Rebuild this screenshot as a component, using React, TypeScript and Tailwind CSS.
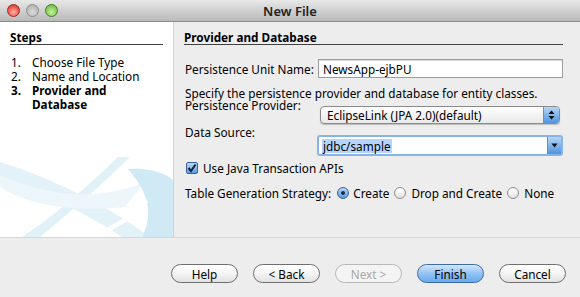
import React from 'react'

const font = { fontFamily: '"Lucida Grande", "Noto Sans", sans-serif' }

function Light({ from, to, ring }: { from: string; to: string; ring: string }) {
  return (
    <div
      className="h-[13px] w-[13px] rounded-full border"
      style={{ background: `radial-gradient(circle at 50% 65%, ${from}, ${to})`, borderColor: ring }}
    />
  )
}

function Watermark() {
  return (
    <svg className="absolute bottom-0 left-0" width="174" height="80" viewBox="0 0 174 80">
      <path d="M0 5 C50 20 110 50 150 80 L122 80 C90 58 40 35 0 20 Z" fill="#e3f2f9" />
      <path d="M40 80 C70 55 105 25 130 0 L118 0 C92 25 60 55 22 80 Z" fill="#e0f1f8" />
      <path d="M0 30 C30 50 80 55 125 50 L145 25 C110 40 60 45 0 18 Z" fill="#edf6fb" />
      <path d="M128 12 C155 10 172 20 174 25 L174 80 L142 80 C152 60 152 40 128 12 Z" fill="#cfe9f5" />
      <path d="M95 80 C118 72 136 60 148 45 L146 42 C132 58 112 70 85 80 Z" fill="#ffffff" />
      <path d="M125 66 C134 60 142 52 147 46 L145 44 C137 53 128 60 117 66 Z" fill="#ffffff" />
    </svg>
  )
}

function Btn({ children, primary, disabled }: { children: React.ReactNode; primary?: boolean; disabled?: boolean }) {
  return (
    <div
      className={`flex h-[19px] w-[67px] items-center justify-center rounded-full border ${
        disabled
          ? 'border-[#b8b8b8] bg-[#f4f4f4] text-[#a8a8a8]'
          : primary
          ? 'border-[#3d6aa8] bg-gradient-to-b from-[#d3e7fc] via-[#93c2f3] to-[#67aaf0] text-black'
          : 'border-[#6f6f6f] bg-gradient-to-b from-white via-[#f4f4f4] to-[#e2e2e2] text-black'
      }`}
    >
      {children}
    </div>
  )
}

function Radio({ checked }: { checked?: boolean }) {
  return (
    <div
      className={`flex h-[12px] w-[12px] shrink-0 items-center justify-center rounded-full border ${
        checked ? 'border-[#3a6296] bg-gradient-to-b from-[#b9d8f8] to-[#5d9be3]' : 'border-[#8c8c8c] bg-gradient-to-b from-white to-[#e4e4e4]'
      }`}
    >
      {checked && <div className="h-[4px] w-[4px] rounded-full bg-[#1b2b44]" />}
    </div>
  )
}

export default function App() {
  return (
    <div className="flex h-[297px] w-[580px] flex-col overflow-hidden whitespace-nowrap bg-[#ededed] text-[11.75px] leading-[14px] text-black" style={font}>
      {/* Title bar */}
      <div className="relative flex h-[22px] shrink-0 items-center border-b border-[#8a8a8a] bg-gradient-to-b from-[#e8e8e8] to-[#b9b9b9]">
        <div className="flex items-center gap-[6px] pl-[7px]">
          <Light from="#ffb0a8" to="#d81e14" ring="#9a2a22" />
          <Light from="#dcdcdc" to="#a9a9a9" ring="#8e8e8e" />
          <Light from="#c9f2a0" to="#56b42a" ring="#3f7d28" />
        </div>
        <div className="absolute inset-0 flex items-center justify-center text-[13px] font-semibold text-[#222]">New File</div>
      </div>

      <div className="flex h-[216px] shrink-0 border-b border-[#d8d8d8]">
        {/* Steps */}
        <div className="relative w-[174px] shrink-0 overflow-hidden border-r border-[#d2d2d2] bg-white px-[10px] pt-[8px]">
          <Watermark />
          <div className="relative border-b border-[#404040] font-bold">Steps</div>
          <div className="relative mt-[10px]">
            <div className="flex"><span className="w-[22px] pl-[1px]">1.</span><span>Choose File Type</span></div>
            <div className="flex"><span className="w-[22px] pl-[1px]">2.</span><span>Name and Location</span></div>
            <div className="flex font-bold"><span className="w-[22px] pl-[1px]">3.</span><span>Provider and<br />Database</span></div>
          </div>
        </div>

        {/* Content */}
        <div className="flex-1 pl-[10px] pr-[17px] pt-[8px]">
          <div className="border-b border-[#404040] font-bold">Provider and Database</div>
          <div className="mt-[14px] flex items-center">
            <span className="w-[134px] pl-[1px]">Persistence Unit Name:</span>
            <div className="flex h-[19px] flex-1 items-center border border-[#9c9c9c] bg-white pl-[4px] shadow-[inset_0_1px_1px_rgba(0,0,0,0.15)]">NewsApp-ejbPU</div>
          </div>
          <div className="mt-[9px] pl-[1px] leading-[12px]">Specify the persistence provider and database for entity classes.</div>
          <div className="flex items-start">
            <span className="w-[136px] pl-[1px] leading-[12px]">Persistence Provider:</span>
            <div className="mr-[3px] mt-[7px] flex h-[18px] flex-1 items-center justify-between rounded-[4px] border border-[#8a8a8a] bg-gradient-to-b from-white to-[#e9e9e9] pl-[6px] shadow-[0_1px_1px_rgba(0,0,0,0.2)]">
              <span>EclipseLink (JPA 2.0)(default)</span>
              <div className="flex h-full w-[16px] items-center justify-center rounded-r-[3px] border-l border-[#6f8fb8] bg-gradient-to-b from-[#b6d6f6] to-[#4f93e0]">
                <svg width="7" height="10" viewBox="0 0 7 10">
                  <path d="M3.5 0.5 L6.5 4 L0.5 4 Z" fill="#111" />
                  <path d="M0.5 6 L6.5 6 L3.5 9.5 Z" fill="#111" />
                </svg>
              </div>
            </div>
          </div>
          <div className="mt-[2px] flex items-start">
            <span className="w-[133px] pl-[1px] leading-[12px]">Data Source:</span>
            <div className="mt-[9px] flex h-[21px] flex-1 items-center justify-between rounded-[3px] border-2 border-[#86b4e8] bg-white pl-[3px]">
              <span className="bg-[#b5d5ff] px-[1px]">jdbc/sample</span>
              <div className="flex h-full w-[14px] items-center justify-center border-l border-[#6f8fb8] bg-gradient-to-b from-[#b6d6f6] to-[#4f93e0]">
                <svg width="7" height="5" viewBox="0 0 7 5"><path d="M0.5 0.5 L6.5 0.5 L3.5 4.5 Z" fill="#111" /></svg>
              </div>
            </div>
          </div>
          <div className="mt-[5px] flex h-[14px] items-center">
            <div className="ml-[2px] flex h-[12px] w-[12px] items-center justify-center rounded-[2px] border border-[#3a6296] bg-gradient-to-b from-[#b9d8f8] to-[#5d9be3]">
              <svg width="10" height="10" viewBox="0 0 10 10"><path d="M1.5 5 L4 8 L8.5 1.5" stroke="#15233a" strokeWidth="2" fill="none" /></svg>
            </div>
            <span className="ml-[5px]">Use Java Transaction APIs</span>
          </div>
          <div className="mt-[11px] flex h-[14px] items-center">
            <span className="pl-[1px]">Table Generation Strategy:</span>
            <div className="ml-[6px]"><Radio checked /></div>
            <span className="ml-[4px]">Create</span>
            <div className="ml-[5px]"><Radio /></div>
            <span className="ml-[5px]">Drop and Create</span>
            <div className="ml-[5px]"><Radio /></div>
            <span className="ml-[5px]">None</span>
          </div>
        </div>
      </div>

      {/* Buttons */}
      <div className="flex flex-1 items-start justify-end gap-[15px] pr-[14px] pt-[26px]">
        <Btn>Help</Btn>
        <Btn>&lt; Back</Btn>
        <Btn disabled>Next &gt;</Btn>
        <Btn primary>Finish</Btn>
        <Btn>Cancel</Btn>
      </div>
    </div>
  )
}
